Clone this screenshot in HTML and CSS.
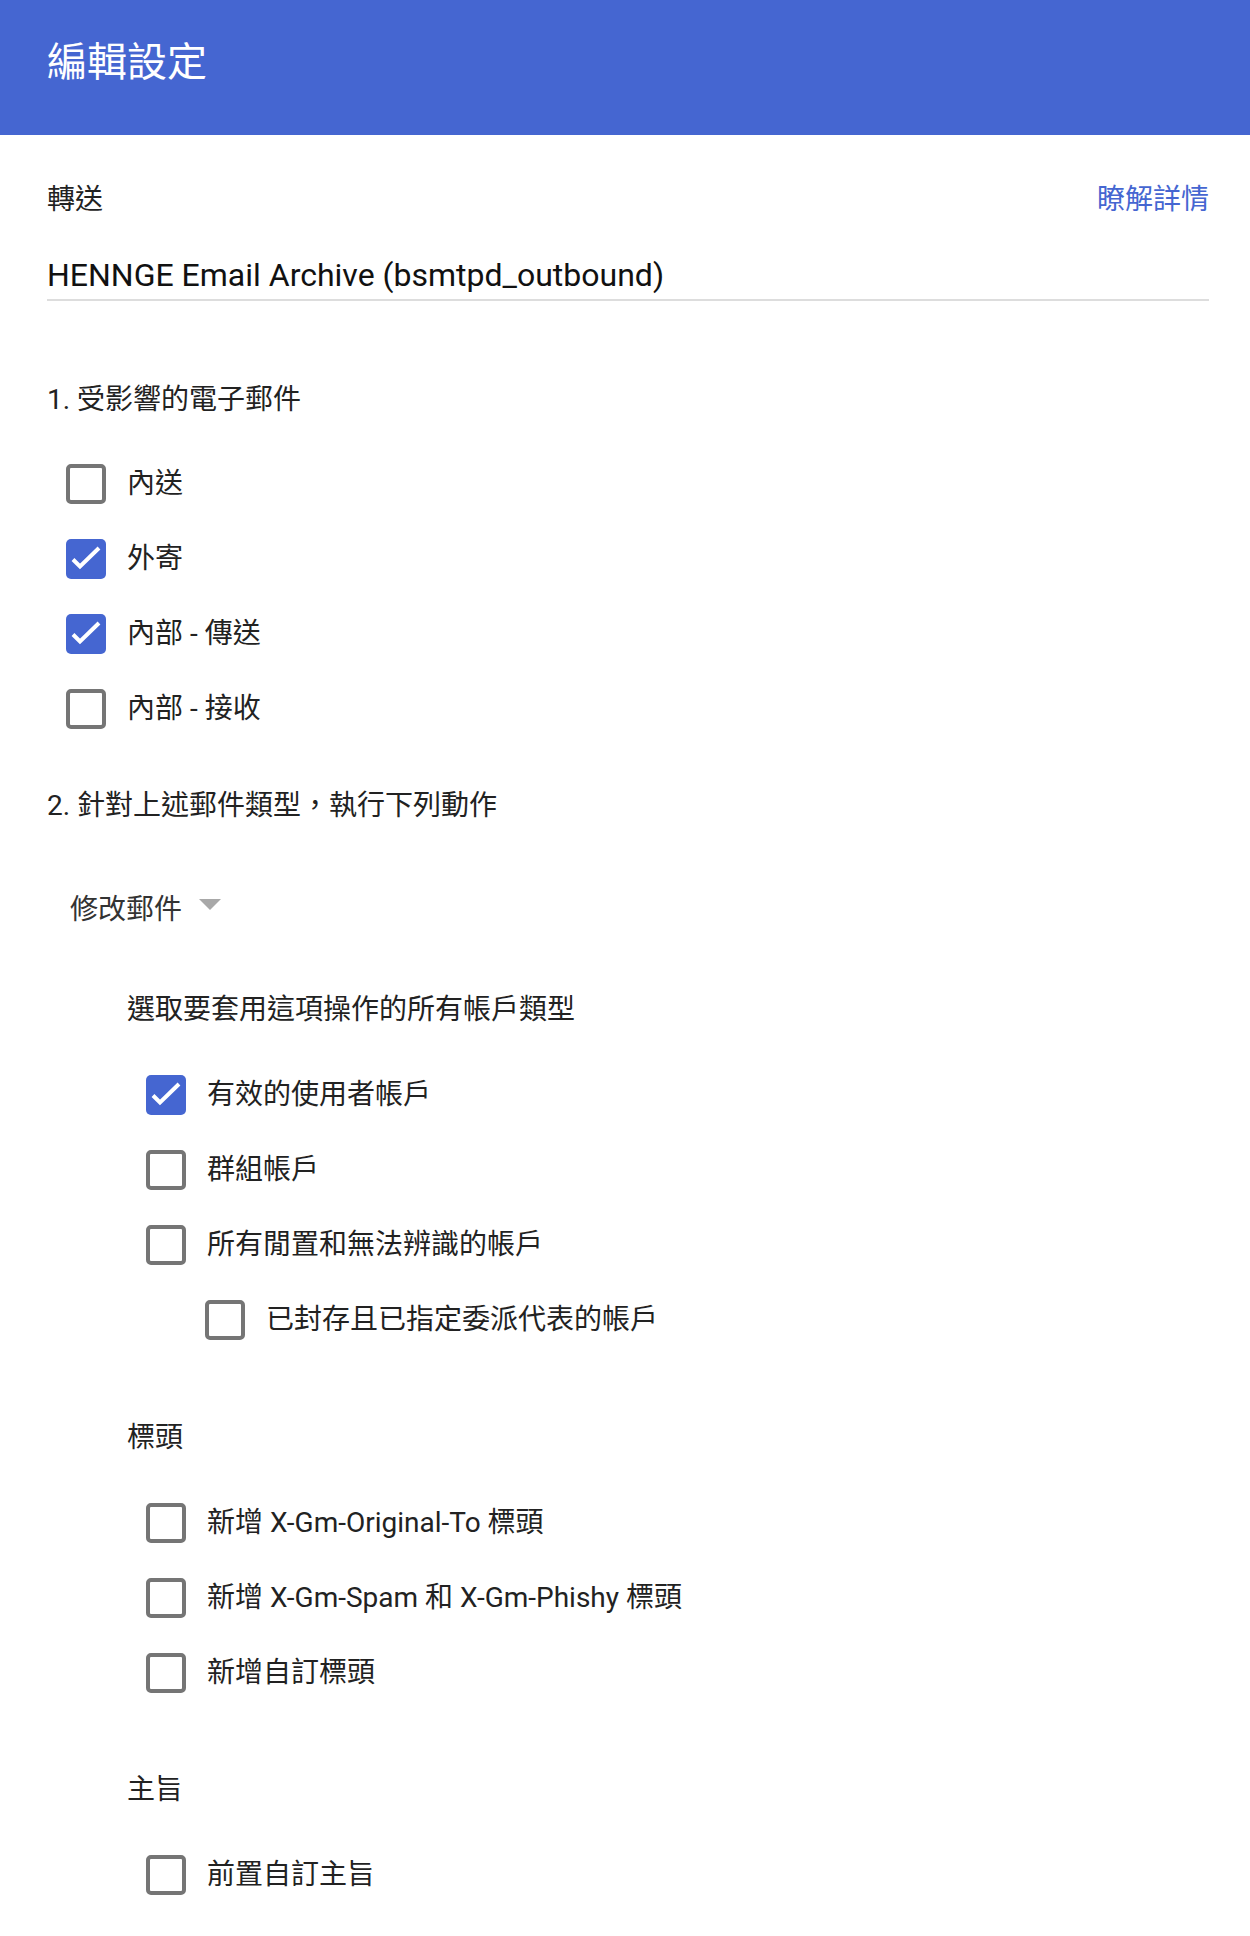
FILE: index.html
```html
<!DOCTYPE html>
<html lang="zh-Hant">
<head>
<meta charset="utf-8">
<title>編輯設定</title>
<link rel="stylesheet" href="styles.css">
</head>
<body>
<header class="appbar"><h1 class="appbar-title">編輯設定</h1></header>
<main class="content">
  <div class="row-head">
    <span class="label">轉送</span>
    <a class="link" href="#">瞭解詳情</a>
  </div>
  <div class="field">HENNGE Email Archive (bsmtpd_outbound)</div>

  <div class="section-title s1">1. 受影響的電子郵件</div>
  <div class="checks checks-l1">
    <div class="check-row"><span class="box"></span><span class="check-label">內送</span></div>
    <div class="check-row"><span class="box on"><svg viewBox="0 0 40 40"><path d="M7 20.5l7 7L33 9"/></svg></span><span class="check-label">外寄</span></div>
    <div class="check-row"><span class="box on"><svg viewBox="0 0 40 40"><path d="M7 20.5l7 7L33 9"/></svg></span><span class="check-label">內部 - 傳送</span></div>
    <div class="check-row"><span class="box"></span><span class="check-label">內部 - 接收</span></div>
  </div>

  <div class="section-title s2">2. 針對上述郵件類型，執行下列動作</div>
  <div class="dropdown"><span>修改郵件</span><span class="caret"></span></div>

  <div class="sub-title st1">選取要套用這項操作的所有帳戶類型</div>
  <div class="checks checks-l2">
    <div class="check-row"><span class="box on"><svg viewBox="0 0 40 40"><path d="M7 20.5l7 7L33 9"/></svg></span><span class="check-label">有效的使用者帳戶</span></div>
    <div class="check-row"><span class="box"></span><span class="check-label">群組帳戶</span></div>
    <div class="check-row"><span class="box"></span><span class="check-label">所有閒置和無法辨識的帳戶</span></div>
    <div class="check-row nested"><span class="box"></span><span class="check-label">已封存且已指定委派代表的帳戶</span></div>
  </div>

  <div class="sub-title st2">標頭</div>
  <div class="checks checks-l2">
    <div class="check-row"><span class="box"></span><span class="check-label">新增 X-Gm-Original-To 標頭</span></div>
    <div class="check-row"><span class="box"></span><span class="check-label">新增 X-Gm-Spam 和 X-Gm-Phishy 標頭</span></div>
    <div class="check-row"><span class="box"></span><span class="check-label">新增自訂標頭</span></div>
  </div>

  <div class="sub-title st3">主旨</div>
  <div class="checks checks-l2">
    <div class="check-row"><span class="box"></span><span class="check-label">前置自訂主旨</span></div>
  </div>
</main>
</body>
</html>
```
FILE: styles.css
```css
* { box-sizing: border-box; }
html, body { margin: 0; padding: 0; background: #ffffff; }
body {
  font-family: Roboto, "Noto Sans CJK TC", sans-serif;
  color: #222222;
  font-size: 28px;
  line-height: 40px;
}
.appbar {
  height: 135px;
  background: #4566d1;
  display: flex;
  align-items: center;
  padding: 0 0 10px 47px;
}
.appbar-title {
  margin: 0;
  font-weight: 400;
  font-size: 40px;
  line-height: 48px;
  color: #ffffff;
}
.content { padding: 0 41px 40px 47px; }
.row-head {
  display: flex;
  justify-content: space-between;
  margin-top: 45px;
}
.link { color: #4566d1; text-decoration: none; }
.field {
  margin-top: 35px;
  font-size: 32px;
  color: #111111;
  padding-bottom: 4px;
  border-bottom: 2px solid #dddddd;
}
.section-title { margin-top: 79px; }
.section-title.s2 { margin-top: 40px; }
.checks { display: flex; flex-direction: column; margin-top: 27px; }
.checks-l1 { padding-left: 19px; margin-top: 26px; }
.checks-l2 { padding-left: 99px; }
.check-row {
  height: 75px;
  display: flex;
  align-items: center;
  gap: 21px;
}
.check-row.nested { padding-left: 59px; }
.box {
  width: 40px;
  height: 40px;
  flex: none;
  border: 4px solid #757575;
  border-radius: 5px;
  display: flex;
  align-items: center;
  justify-content: center;
  overflow: hidden;
}
.box.on { background: #4566d1; border: none; }
.box svg { width: 40px; height: 40px; display: block; }
.box svg path { fill: none; stroke: #ffffff; stroke-width: 4; stroke-linecap: butt; stroke-linejoin: miter; }
.dropdown {
  margin-top: 64px;
  padding-left: 23px;
  display: flex;
  align-items: center;
  gap: 17px;
  color: #333333;
}
.caret {
  width: 0;
  height: 0;
  border-left: 11px solid transparent;
  border-right: 11px solid transparent;
  border-top: 11px solid #a8a8a8;
  margin-top: -12px;
}
.sub-title { padding-left: 80px; margin-top: 60px; }
.sub-title.st2 { margin-top: 61px; }
.sub-title.st3 { margin-top: 60px; }
```
